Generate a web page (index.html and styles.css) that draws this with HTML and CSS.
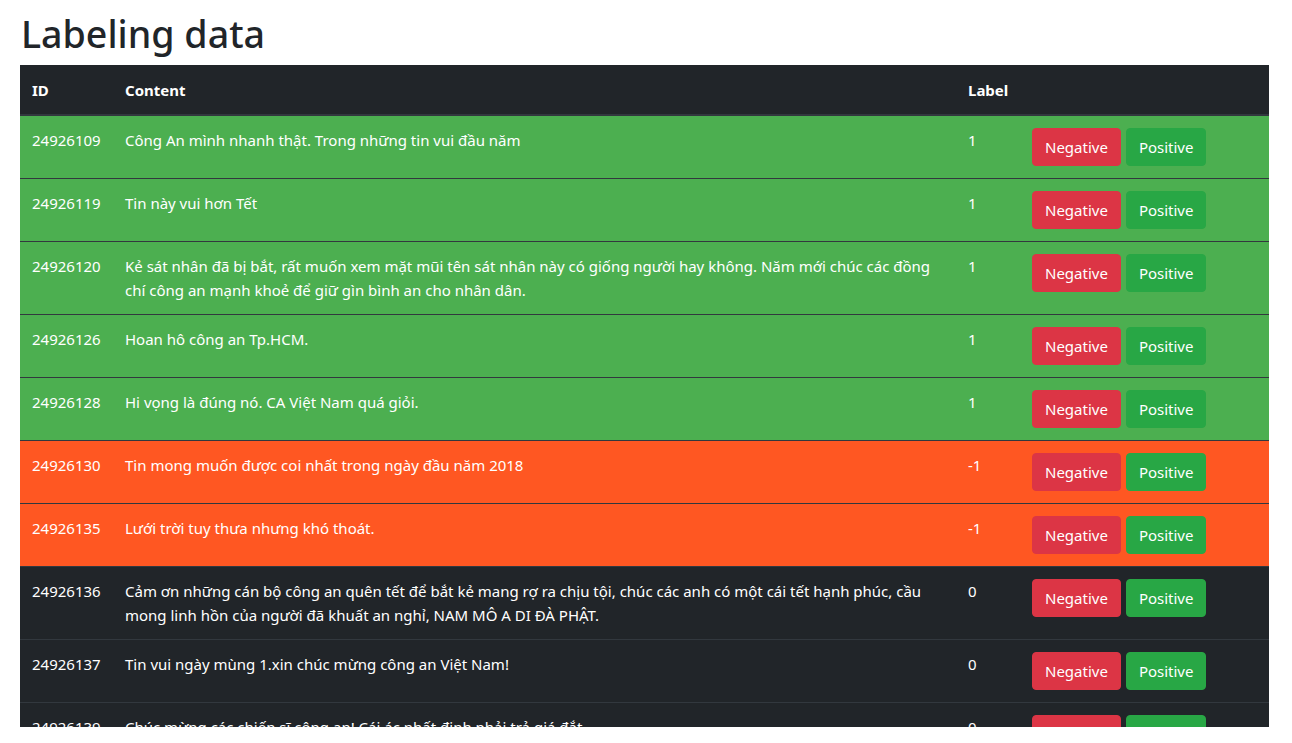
FILE: index.html
```html
<!DOCTYPE html>
<html lang="vi">
<head>
<meta charset="utf-8">
<title>Labeling data</title>
<link rel="stylesheet" href="styles.css">
</head>
<body>
<div class="page">
  <h1 class="title">Labeling data</h1>
  <div class="table-wrap">
    <table class="data">
      <colgroup>
        <col class="c-id"><col class="c-content"><col class="c-label"><col class="c-actions">
      </colgroup>
      <thead>
        <tr><th>ID</th><th>Content</th><th>Label</th><th></th></tr>
      </thead>
      <tbody>
        <tr class="pos"><td>24926109</td><td>Công An mình nhanh thật. Trong những tin vui đầu năm</td><td>1</td><td><div class="actions"><button class="btn neg">Negative</button><button class="btn ok">Positive</button></div></td></tr>
        <tr class="pos"><td>24926119</td><td>Tin này vui hơn Tết</td><td>1</td><td><div class="actions"><button class="btn neg">Negative</button><button class="btn ok">Positive</button></div></td></tr>
        <tr class="pos"><td>24926120</td><td>Kẻ sát nhân đã bị bắt, rất muốn xem mặt mũi tên sát nhân này có giống người hay không. Năm mới chúc các đồng chí công an mạnh khoẻ để giữ gìn bình an cho nhân dân.</td><td>1</td><td><div class="actions"><button class="btn neg">Negative</button><button class="btn ok">Positive</button></div></td></tr>
        <tr class="pos"><td>24926126</td><td>Hoan hô công an Tp.HCM.</td><td>1</td><td><div class="actions"><button class="btn neg">Negative</button><button class="btn ok">Positive</button></div></td></tr>
        <tr class="pos"><td>24926128</td><td>Hi vọng là đúng nó. CA Việt Nam quá giỏi.</td><td>1</td><td><div class="actions"><button class="btn neg">Negative</button><button class="btn ok">Positive</button></div></td></tr>
        <tr class="negrow"><td>24926130</td><td>Tin mong muốn được coi nhất trong ngày đầu năm 2018</td><td>-1</td><td><div class="actions"><button class="btn neg">Negative</button><button class="btn ok">Positive</button></div></td></tr>
        <tr class="negrow"><td>24926135</td><td>Lưới trời tuy thưa nhưng khó thoát.</td><td>-1</td><td><div class="actions"><button class="btn neg">Negative</button><button class="btn ok">Positive</button></div></td></tr>
        <tr><td>24926136</td><td>Cảm ơn những cán bộ công an quên tết để bắt kẻ mang rợ ra chịu tội, chúc các anh có một cái tết hạnh phúc, cầu mong linh hồn của người đã khuất an nghỉ, NAM MÔ A DI ĐÀ PHẬT.</td><td>0</td><td><div class="actions"><button class="btn neg">Negative</button><button class="btn ok">Positive</button></div></td></tr>
        <tr><td>24926137</td><td>Tin vui ngày mùng 1.xin chúc mừng công an Việt Nam!</td><td>0</td><td><div class="actions"><button class="btn neg">Negative</button><button class="btn ok">Positive</button></div></td></tr>
        <tr><td>24926139</td><td>Chúc mừng các chiến sĩ công an! Cái ác nhất định phải trả giá đắt.</td><td>0</td><td><div class="actions"><button class="btn neg">Negative</button><button class="btn ok">Positive</button></div></td></tr>
      </tbody>
    </table>
  </div>
</div>
</body>
</html>
```
FILE: styles.css
```css
html, body {
  margin: 0;
  padding: 0;
  background: #fff;
}
body {
  font-family: "Noto Sans", "Open Sans", sans-serif;
  font-size: 15px;
  line-height: 24px;
  color: #212529;
}
.page {
  padding: 0 23px 0 20px;
}
.title {
  margin: 0;
  padding: 10px 0 7px 1px;
  font-size: 37.6px;
  line-height: 48px;
  font-weight: 500;
  color: #212529;
}
.table-wrap {
  height: 662px;
  overflow: hidden;
}
.data {
  width: 100%;
  table-layout: fixed;
  border-collapse: collapse;
  background: #212529;
  color: #fff;
}
.c-id { width: 93px; }
.c-content { width: 843px; }
.c-label { width: 64px; }
.c-actions { width: 249px; }
.data th, .data td {
  padding: 12px;
  text-align: left;
  vertical-align: top;
  border-top: 1px solid #32383e;
}
.data th {
  font-weight: 700;
  padding-top: 13px;
  padding-bottom: 12px;
  border-top: 0;
  border-bottom: 2px solid #32383e;
}
.data tr.pos { background: #4caf50; }
.data tr.negrow { background: #ff5722; }
.actions {
  display: flex;
  gap: 5px;
}
.btn {
  font-family: inherit;
  font-size: 15px;
  line-height: 24px;
  padding: 6px 12px;
  border: 1px solid transparent;
  border-radius: 4px;
  color: #fff;
  cursor: pointer;
}
.btn.neg { background: #dc3545; border-color: #dc3545; }
.btn.ok { background: #28a745; border-color: #28a745; }
```
